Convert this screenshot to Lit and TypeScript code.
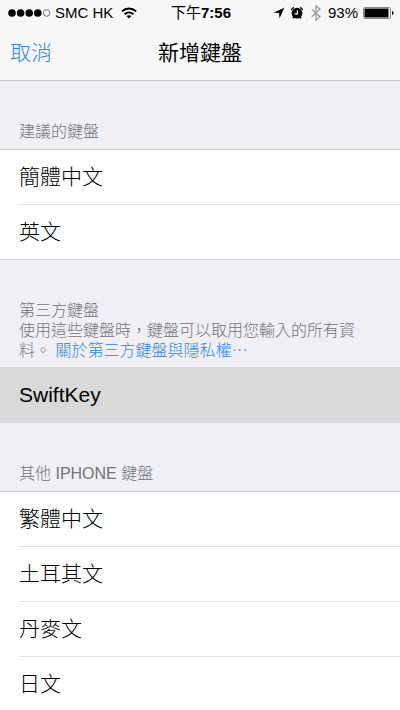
import { LitElement, html, css, svg } from "lit";
import { customElement, property } from "lit/decorators.js";

@customElement("status-bar")
class StatusBar extends LitElement {
  static styles = css`
    :host {
      display: grid;
      grid-template-columns: 1fr auto 1fr;
      align-items: center;
      padding: 0 6px 0 8px;
      height: 26px;
      font-size: 15px;
      line-height: 26px;
      color: #000;
    }
    svg { display: block; flex: none; }
    .side { display: flex; align-items: center; white-space: nowrap; }
    .left { gap: 4px; }
    .wifi { margin-left: 4px; }
    .right { justify-content: flex-end; gap: 5px; }
    .time { font-weight: 400; }
    .digits { font-weight: 700; }
  `;

  render() {
    return html`
      <div class="side left">
        <svg width="43" height="8" viewBox="0 0 43 8" aria-label="signal">
          ${[4, 12.6, 21.2, 29.8].map((x) => svg`<circle cx=${x} cy="4" r="3.8"></circle>`)}
          <circle cx="38.6" cy="4" r="3.3" fill="none" stroke="#555" stroke-width=".8"></circle>
        </svg>
        <span>SMC HK</span>
        <svg class="wifi" width="16" height="12" viewBox="0 0 16 12" fill="none" stroke="#000" stroke-width="1.9">
          <path d="M.9 4.4C5 .5 11 .5 15.1 4.4"></path>
          <path d="M3.600 7.2C6.2 4.8 9.8 4.8 12.4 7.2"></path>
          <path d="M8 11.6 5.5 9.1C7 7.8 9 7.8 10.5 9.1Z" fill="#000" stroke="none"></path>
        </svg>
      </div>
      <div class="time">下午<span class="digits">7:56</span></div>
      <div class="side right">
        <svg width="12" height="12" viewBox="0 0 12 12"><path d="M11.2.8 6.5 11.4 6.1 6.1.5 5.8Z"></path></svg>
        <svg width="14" height="14" viewBox="0 0 14 14">
          <circle cx="7" cy="7.2" r="5.4"></circle>
          <path d="M1.300 4A7.4 7.4 0 0 1 3.900 1.400M10.1 1.400a7.4 7.4 0 0 1 2.600 2.600" fill="none" stroke="#000" stroke-width="1.3"></path>
          <path d="m3.700 11.200-1 1.200M10.300 11.200l1 1.200" stroke="#000" stroke-width="1.3"></path>
          <path d="M7.400 4.300v3.600H4.400" fill="none" stroke="#fff" stroke-width="1.200"></path>
        </svg>
        <svg width="14" height="16" viewBox="0 0 14 16"><path d="m2.800 4.300 8.200 7.400-4 3.500V.8l4 3.500-8.200 7.400" fill="none" stroke="#9a9a9a" stroke-width="1.300"></path></svg>
        <span>93%</span>
        <svg width="31" height="12" viewBox="0 0 31 12">
          <rect x=".5" y=".5" width="27" height="11" rx="1.6" fill="#fff" stroke="#888"></rect>
          <rect x="1.500" y="1.500" width="24" height="9"></rect>
          <path d="M29 4c2 .4 2 3.600 0 4Z"></path>
        </svg>
      </div>
    `;
  }
}

@customElement("keyboard-list")
class KeyboardList extends LitElement {
  @property({ attribute: false }) items: string[] = [];
  @property() selected = "";

  static styles = css`
    ul {
      list-style: none;
      margin: 0;
      padding: 0;
      background: #fff;
      border: solid #cecdd2;
      border-width: 1px 0;
    }
    ul.highlighted { border-color: #d9d9d9; background: #d9d9d9; }
    li { padding-left: 19px; }
    li + li button { border-top: 1px solid #e2e2e4; }
    button {
      display: block;
      width: 100%;
      margin: 0;
      padding: 12px 0;
      border: 0;
      background: none;
      color: #000;
      font: inherit;
      font-size: 21px;
      line-height: 30px;
      text-align: left;
    }
  `;

  render() {
    return html`
      <ul class=${this.items.includes(this.selected) ? "highlighted" : ""}>
        ${this.items.map((name) => html`<li><button type="button">${name}</button></li>`)}
      </ul>
    `;
  }
}

@customElement("app-root")
class AppRoot extends LitElement {
  static styles = css`
    :host {
      display: flex;
      flex-direction: column;
      height: 100vh;
      background: #efeff4;
      font-family: "Liberation Sans", "Noto Sans CJK TC", sans-serif;
      font-weight: 300;
    }
    header { flex: none; background: #f7f7f7; border-bottom: 1px solid #c4c4c8; }
    nav {
      display: grid;
      grid-template-columns: 1fr auto 1fr;
      align-items: center;
      padding: 0 10px;
      height: 54px;
    }
    .cancel {
      justify-self: start;
      padding: 0;
      border: 0;
      background: none;
      color: #2f86e6;
      font: inherit;
      font-size: 21px;
      line-height: 30px;
    }
    h1 { margin: 0; font-size: 21px; line-height: 30px; font-weight: 400; }
    main { flex: 1; min-height: 0; overflow-y: auto; scrollbar-width: none; }
    .heading {
      padding: 41px 40px 7px 19px;
      color: #737378;
      font-size: 16px;
      line-height: 20px;
    }
    .noted { padding-bottom: 6px; }
    h2, p { margin: 0; font-size: inherit; font-weight: inherit; }
    a { color: #2f86e6; text-decoration: none; line-height: 1; }
    .ellipsis { font-family: "Noto Sans CJK TC", sans-serif; line-height: 1; }
  `;

  render() {
    return html`
      <header>
        <status-bar></status-bar>
        <nav>
          <button class="cancel" type="button">取消</button>
          <h1>新增鍵盤</h1>
        </nav>
      </header>
      <main lang="zh-Hant">
        <section>
          <div class="heading"><h2>建議的鍵盤</h2></div>
          <keyboard-list .items=${["簡體中文", "英文"]}></keyboard-list>
        </section>
        <section>
          <div class="heading noted">
            <h2>第三方鍵盤</h2>
            <p>使用這些鍵盤時，鍵盤可以取用您輸入的所有資料。 <a href="#privacy">關於第三方鍵盤與隱私權<span class="ellipsis">…</span></a></p>
          </div>
          <keyboard-list .items=${["SwiftKey"]} selected="SwiftKey"></keyboard-list>
        </section>
        <section>
          <div class="heading"><h2>其他 IPHONE 鍵盤</h2></div>
          <keyboard-list .items=${["繁體中文", "土耳其文", "丹麥文", "日文"]}></keyboard-list>
        </section>
      </main>
    `;
  }
}
